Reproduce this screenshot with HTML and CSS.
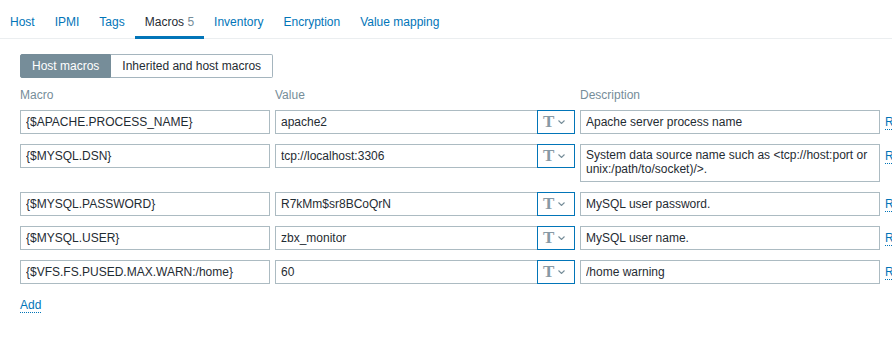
FILE: index.html
```html
<!DOCTYPE html>
<html lang="en">
  <head>
    <meta charset="UTF-8" />
    <title>Host macros</title>
    <link rel="stylesheet" href="styles.css">
  </head>
  <body>
    <nav class="tabs">
      <a href="#" class="tab">Host</a>
      <a href="#" class="tab">IPMI</a>
      <a href="#" class="tab">Tags</a>
      <a href="#" class="tab active">Macros <span class="count">5</span></a>
      <a href="#" class="tab">Inventory</a>
      <a href="#" class="tab">Encryption</a>
      <a href="#" class="tab">Value mapping</a>
    </nav>
    <main class="content">
      <div class="radioGroup">
        <span class="radioItem selected">Host macros</span>
        <span class="radioItem">Inherited and host macros</span>
      </div>

      <div class="macroHead">
        <span>Macro</span>
        <span>Value</span>
        <span>Description</span>
      </div>

      <div class="macroList">
        <input class="field" type="text" value="{$APACHE.PROCESS_NAME}" />
        <div class="valueBox">
          <input class="field" type="text" value="apache2" />
          <button class="typeBtn"><span class="typeT">T</span><svg width="7" height="4" viewBox="0 0 7 4"><polyline points="0.5,0.5 3.5,3.5 6.5,0.5" fill="none" stroke="#768d99" stroke-width="1.1"/></svg></button>
        </div>
        <input class="field" type="text" value="Apache server process name" />
        <a href="#" class="link remove">Remove</a>

        <input class="field" type="text" value="{$MYSQL.DSN}" />
        <div class="valueBox">
          <input class="field" type="text" value="tcp://localhost:3306" />
          <button class="typeBtn"><span class="typeT">T</span><svg width="7" height="4" viewBox="0 0 7 4"><polyline points="0.5,0.5 3.5,3.5 6.5,0.5" fill="none" stroke="#768d99" stroke-width="1.1"/></svg></button>
        </div>
        <textarea class="field tall">System data source name such as <tcp://host:port or unix:/path/to/socket)/>.</textarea>
        <a href="#" class="link remove">Remove</a>

        <input class="field" type="text" value="{$MYSQL.PASSWORD}" />
        <div class="valueBox">
          <input class="field" type="text" value="R7kMm$sr8BCoQrN" />
          <button class="typeBtn"><span class="typeT">T</span><svg width="7" height="4" viewBox="0 0 7 4"><polyline points="0.5,0.5 3.5,3.5 6.5,0.5" fill="none" stroke="#768d99" stroke-width="1.1"/></svg></button>
        </div>
        <input class="field" type="text" value="MySQL user password." />
        <a href="#" class="link remove">Remove</a>

        <input class="field" type="text" value="{$MYSQL.USER}" />
        <div class="valueBox">
          <input class="field" type="text" value="zbx_monitor" />
          <button class="typeBtn"><span class="typeT">T</span><svg width="7" height="4" viewBox="0 0 7 4"><polyline points="0.5,0.5 3.5,3.5 6.5,0.5" fill="none" stroke="#768d99" stroke-width="1.1"/></svg></button>
        </div>
        <input class="field" type="text" value="MySQL user name." />
        <a href="#" class="link remove">Remove</a>

        <input class="field" type="text" value="{$VFS.FS.PUSED.MAX.WARN:/home}" />
        <div class="valueBox">
          <input class="field" type="text" value="60" />
          <button class="typeBtn"><span class="typeT">T</span><svg width="7" height="4" viewBox="0 0 7 4"><polyline points="0.5,0.5 3.5,3.5 6.5,0.5" fill="none" stroke="#768d99" stroke-width="1.1"/></svg></button>
        </div>
        <input class="field" type="text" value="/home warning" />
        <a href="#" class="link remove">Remove</a>
      </div>

      <div class="addRow">
        <a href="#" class="link">Add</a>
      </div>
    </main>
  </body>
</html>
```
FILE: styles.css
```css
html,
body {
  margin: 0;
  overflow: hidden;
  background: #fff;
}
body {
  font-family: 'Liberation Sans', Arial, sans-serif;
  font-size: 12px;
  line-height: 14px;
  color: #1f2c33;
}
.tabs {
  display: flex;
  height: 38px;
  border-bottom: 1px solid #ebeef0;
}
.tab {
  display: block;
  padding: 15px 10px 7px;
  margin-bottom: -1px;
  border-bottom: 3px solid transparent;
  color: #0275b8;
  text-decoration: none;
  white-space: nowrap;
}
.tab.active {
  color: #1f2c33;
  border-bottom-color: #0275b8;
}
.count {
  color: #768d99;
}
.content {
  padding: 15px 0 0 20px;
}
.radioGroup {
  display: flex;
}
.radioItem {
  height: 22px;
  line-height: 22px;
  padding: 0 11px;
  border: 1px solid #a5b5be;
  white-space: nowrap;
}
.radioItem.selected {
  background: #768d99;
  border-color: #768d99;
  color: #fff;
  border-radius: 2px 0 0 2px;
}
.radioItem + .radioItem {
  border-left: none;
  border-radius: 0 2px 2px 0;
}
.macroHead,
.macroList {
  display: grid;
  grid-template-columns: 250px 300px 300px max-content;
  column-gap: 5px;
}
.macroHead {
  margin: 10px 0 8px;
  color: #768d99;
}
.macroList {
  row-gap: 10px;
  align-items: start;
}
.field {
  box-sizing: border-box;
  width: 100%;
  height: 24px;
  margin: 0;
  padding: 0 5px;
  border: 1px solid #acbbc2;
  border-radius: 0;
  background: #fff;
  font: inherit;
  line-height: 22px;
  color: #1f2c33;
  outline: none;
}
textarea.field.tall {
  height: 38px;
  padding: 3px 5px;
  line-height: 14px;
  resize: none;
  overflow: hidden;
  display: block;
}
.valueBox {
  display: flex;
}
.valueBox .field {
  flex: 1;
  min-width: 0;
}
.typeBtn {
  box-sizing: border-box;
  display: flex;
  align-items: center;
  flex: 0 0 38px;
  height: 24px;
  margin: 0 0 0 -1px;
  padding: 0 0 0 5px;
  border: 1px solid #0275b8;
  background: #fff;
  cursor: pointer;
}
.typeT {
  font-family: 'Liberation Serif', 'Times New Roman', serif;
  font-size: 17px;
  font-weight: bold;
  line-height: 22px;
  color: #8799a4;
  margin-right: 4px;
}
.link {
  display: inline-block;
  color: #0275b8;
  text-decoration: none;
  border-bottom: 1px dotted #0275b8;
  line-height: 14px;
}
.remove {
  justify-self: start;
  margin-top: 5px;
  white-space: nowrap;
}
.addRow {
  margin-top: 14px;
}
```
